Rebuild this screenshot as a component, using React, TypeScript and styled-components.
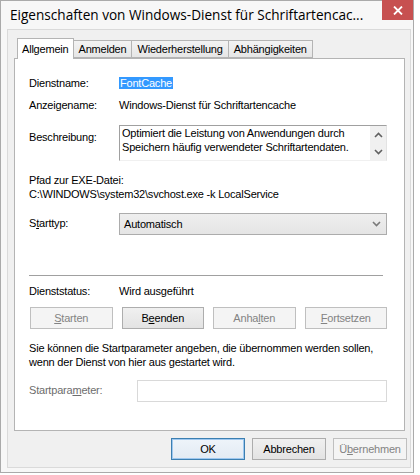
import React from "react";
import styled, { createGlobalStyle } from "styled-components";

const GlobalStyle = createGlobalStyle`
  html, body {
    margin: 0;
    padding: 0;
    background: #ffffff;
  }
  body {
    font-family: "Liberation Sans", Arial, sans-serif;
    font-size: 11px;
    letter-spacing: -0.2px;
    color: #000;
  }
`;

const Window = styled.div`
  box-sizing: border-box;
  width: 414px;
  height: 473px;
  border: 1px solid #aaaaaa;
  background: #f7f7f7;
  display: flex;
  flex-direction: column;
  padding: 0 2px 4px 6px;
`;

const TitleBar = styled.div`
  height: 28px;
  display: flex;
  align-items: flex-start;
`;

const Title = styled.div`
  flex: 1;
  font-family: "Open Sans", "Noto Sans", sans-serif;
  font-size: 13.6px;
  letter-spacing: 0;
  line-height: 28px;
  padding-left: 3px;
  white-space: nowrap;
  overflow: hidden;
  color: #000;
`;

const CloseButton = styled.div`
  width: 31px;
  height: 20px;
  margin-top: -1px;
  margin-right: -2px;
  background: #c75050;
  display: flex;
  align-items: center;
  justify-content: center;
`;

const Client = styled.div`
  flex: 1;
  display: flex;
  flex-direction: column;
  border: 1px solid #dadada;
  background: #f0f0f0;
  padding: 8px 5px 7px 6px;
`;

const TabStrip = styled.div`
  height: 21px;
  display: flex;
  align-items: flex-end;
  padding-left: 3px;
`;

const Tab = styled.div<{ $active?: boolean }>`
  box-sizing: border-box;
  height: ${(p) => (p.$active ? "21px" : "18px")};
  margin-bottom: ${(p) => (p.$active ? "0" : "1px")};
  margin-left: ${(p) => (p.$active ? "0" : "-1px")};
  padding: 0 ${(p) => (p.$active ? "4px" : "5px")};
  border: 1px solid #b4b4b4;
  border-bottom: ${(p) => (p.$active ? "none" : "1px solid #b4b4b4")};
  background: ${(p) => (p.$active ? "#ffffff" : "linear-gradient(#f3f3f3, #e6e6e6)")};
  display: flex;
  align-items: center;
  position: relative;
  z-index: ${(p) => (p.$active ? 2 : 1)};
  white-space: nowrap;
  &:first-child {
    margin-left: 0;
  }
`;

const Panel = styled.div`
  flex: 1;
  margin-top: -1px;
  border: 1px solid #b4b4b4;
  background: #ffffff;
  display: flex;
  flex-direction: column;
  padding: 18px 17px 0 14px;
`;

const FieldRow = styled.div<{ $top: number; $labelWidth?: number }>`
  display: grid;
  grid-template-columns: ${(p) => p.$labelWidth ?? 90}px 1fr;
  align-items: start;
  margin-top: ${(p) => p.$top}px;
  line-height: 13px;
`;

const Label = styled.div<{ $disabled?: boolean; $offset?: number }>`
  padding-top: ${(p) => p.$offset ?? 0}px;
  color: ${(p) => (p.$disabled ? "#6d6d6d" : "#000")};
  white-space: nowrap;
`;

const Value = styled.div`
  white-space: nowrap;
`;

const Selected = styled.span`
  background: #3399ff;
  color: #ffffff;
  padding: 0 1px;
`;

const DescBox = styled.div`
  box-sizing: border-box;
  height: 36px;
  display: flex;
  border: 1px solid;
  border-color: #a0a0a0 #e3e3e3 #f0f0f0 #a0a0a0;
`;

const DescText = styled.div`
  flex: 1;
  padding: 0 0 0 2px;
  line-height: 14px;
  white-space: nowrap;
  overflow: hidden;
`;

const ScrollStrip = styled.div`
  width: 16px;
  background: #f0f0f0;
  display: flex;
  flex-direction: column;
  align-items: center;
  justify-content: space-between;
  padding: 6px 0 5px;
`;

const Block = styled.div<{ $top: number }>`
  margin-top: ${(p) => p.$top}px;
  line-height: 14px;
  white-space: nowrap;
`;

const Combo = styled.div`
  box-sizing: border-box;
  height: 22px;
  border: 1px solid #acacac;
  background: linear-gradient(#efefef, #e5e5e5);
  display: flex;
  align-items: center;
  justify-content: space-between;
  padding: 0 5px 0 4px;
`;

const Separator = styled.div`
  margin-top: 40px;
  margin-right: 4px;
  height: 1px;
  background: #a0a0a0;
`;

const ActionGrid = styled.div`
  display: grid;
  grid-template-columns: repeat(4, 1fr);
  gap: 9px;
  margin-top: 9px;
  padding-left: 1px;
`;

const PushButton = styled.div<{ $disabled?: boolean; $default?: boolean; $width?: number }>`
  box-sizing: border-box;
  height: 22px;
  width: ${(p) => (p.$width ? `${p.$width}px` : "auto")};
  display: flex;
  align-items: center;
  justify-content: center;
  border: 1px solid
    ${(p) => (p.$default ? "#3c7fb1" : p.$disabled ? "#bfbfbf" : "#adadad")};
  background: ${(p) =>
    p.$disabled ? "#f4f4f4" : p.$default ? "linear-gradient(#eef4fa, #e3ebf3)" : "linear-gradient(#f0f0f0, #e3e3e3)"};
  color: ${(p) => (p.$disabled ? "#838383" : "#000")};
  box-shadow: ${(p) => (p.$default ? "inset 0 0 0 1px #9fc8ef" : "none")};
  white-space: nowrap;
`;

const Key = styled.span`
  text-decoration: underline;
  text-underline-offset: 1px;
`;

const Hint = styled.div`
  margin-top: 12px;
  line-height: 14px;
`;

const ParamInput = styled.div`
  box-sizing: border-box;
  height: 22px;
  border: 1px solid #d9d9d9;
  background: #ffffff;
`;

const Footer = styled.div`
  display: flex;
  justify-content: flex-end;
  gap: 7px;
  margin-top: 7px;
  margin-right: -2px;
`;

const Chevron: React.FC<{ dir: "up" | "down"; color?: string }> = ({ dir, color = "#606060" }) => (
  <svg width="9" height="6" viewBox="0 0 9 6">
    <path
      d={dir === "up" ? "M1 5 L4.5 1.5 L8 5" : "M1 1 L4.5 4.5 L8 1"}
      fill="none"
      stroke={color}
      strokeWidth="1.6"
    />
  </svg>
);

export default function App() {
  return (
    <>
      <GlobalStyle />
      <Window>
        <TitleBar>
          <Title>Eigenschaften von Windows-Dienst für Schriftartencac...</Title>
          <CloseButton>
            <svg width="10" height="9" viewBox="0 0 10 9">
              <path d="M1 0.5 L9 8.5 M9 0.5 L1 8.5" stroke="#ffffff" strokeWidth="1.8" />
            </svg>
          </CloseButton>
        </TitleBar>
        <Client>
          <TabStrip>
            <Tab $active>Allgemein</Tab>
            <Tab>Anmelden</Tab>
            <Tab>Wiederherstellung</Tab>
            <Tab>Abhängigkeiten</Tab>
          </TabStrip>
          <Panel>
            <FieldRow $top={0}>
              <Label>Dienstname:</Label>
              <Value>
                <Selected>FontCache</Selected>
              </Value>
            </FieldRow>
            <FieldRow $top={9}>
              <Label>Anzeigename:</Label>
              <Value>Windows-Dienst für Schriftartencache</Value>
            </FieldRow>
            <FieldRow $top={13}>
              <Label $offset={6}>Beschreibung:</Label>
              <DescBox>
                <DescText>
                  Optimiert die Leistung von Anwendungen durch
                  <br />
                  Speichern häufig verwendeter Schriftartendaten.
                </DescText>
                <ScrollStrip>
                  <Chevron dir="up" />
                  <Chevron dir="down" />
                </ScrollStrip>
              </DescBox>
            </FieldRow>
            <Block $top={12}>
              Pfad zur EXE-Datei:
              <br />
              C:\WINDOWS\system32\svchost.exe -k LocalService
            </Block>
            <FieldRow $top={12}>
              <Label $offset={4}>
                S<Key>t</Key>arttyp:
              </Label>
              <Combo>
                <span>Automatisch</span>
                <Chevron dir="down" color="#7a7a7a" />
              </Combo>
            </FieldRow>
            <Separator />
            <FieldRow $top={9}>
              <Label>Dienststatus:</Label>
              <Value>Wird ausgeführt</Value>
            </FieldRow>
            <ActionGrid>
              <PushButton $disabled>
                <Key>S</Key>tarten
              </PushButton>
              <PushButton>
                B<Key>e</Key>enden
              </PushButton>
              <PushButton $disabled>
                Anha<Key>l</Key>ten
              </PushButton>
              <PushButton $disabled>
                <Key>F</Key>ortsetzen
              </PushButton>
            </ActionGrid>
            <Hint>
              Sie können die Startparameter angeben, die übernommen werden sollen,
              <br />
              wenn der Dienst von hier aus gestartet wird.
            </Hint>
            <FieldRow $top={11} $labelWidth={108}>
              <Label $disabled $offset={4}>
                Startpara<Key>m</Key>eter:
              </Label>
              <ParamInput />
            </FieldRow>
          </Panel>
          <Footer>
            <PushButton $default $width={74}>
              OK
            </PushButton>
            <PushButton $width={74}>Abbrechen</PushButton>
            <PushButton $disabled $width={74}>
              Ü<Key>b</Key>ernehmen
            </PushButton>
          </Footer>
        </Client>
      </Window>
    </>
  );
}
